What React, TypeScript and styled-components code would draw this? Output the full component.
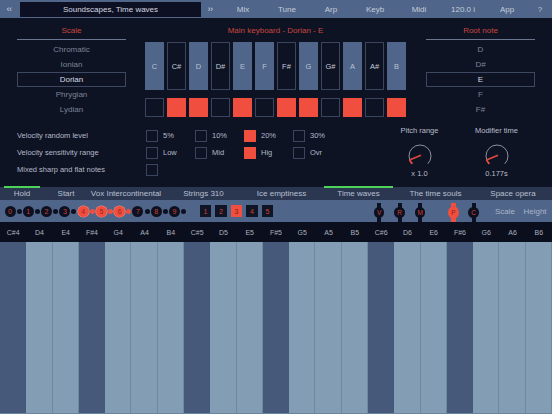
import React from "react";
import styled, { createGlobalStyle } from "styled-components";

const GlobalStyle = createGlobalStyle`
  html, body {
    margin: 0;
    padding: 0;
    background: #0e1324;
  }
  body {
    font-family: "Liberation Sans", Arial, sans-serif;
  }
  * {
    box-sizing: border-box;
  }
`;

const RED = "#f04e3e";

const Screen = styled.div`
  width: 552px;
  height: 414px;
  display: flex;
  flex-direction: column;
  overflow: hidden;
  background: #0e1324;
  color: #b4b9c6;
`;

/* ---------- top bar ---------- */

const TopBar = styled.div`
  height: 18px;
  flex-shrink: 0;
  background: #4f6589;
  display: flex;
  align-items: center;
  font-size: 8px;
  color: #c5ccd9;
`;

const Arrow = styled.div`
  width: 20px;
  padding-right: 2px;
  text-align: center;
  font-size: 9px;
  letter-spacing: -0.5px;
  color: #d0d6e2;
`;

const Title = styled.div`
  width: 181px;
  height: 15px;
  background: #0c1022;
  display: flex;
  align-items: center;
  justify-content: center;
  color: #d4d8e0;
  font-size: 8px;
`;

const NavItem = styled.div<{ $w?: number }>`
  width: ${(p) => p.$w ?? 44}px;
  text-align: center;
`;

/* ---------- main panel ---------- */

const Panel = styled.div`
  height: 169px;
  flex-shrink: 0;
  padding: 5px 0 0 17px;
`;

const Upper = styled.div`
  display: flex;
  align-items: flex-start;
`;

const Column = styled.div<{ $w: number; $ml?: number }>`
  width: ${(p) => p.$w}px;
  margin-left: ${(p) => p.$ml ?? 0}px;
`;

const SectionTitle = styled.div<{ $ruled?: boolean }>`
  height: 17px;
  line-height: 15px;
  text-align: center;
  color: #c9463e;
  font-size: 8px;
  border-bottom: 1px solid ${(p) => (p.$ruled ? "#6b7590" : "transparent")};
`;

const List = styled.div`
  padding-top: 2px;
`;

const ListItem = styled.div<{ $selected?: boolean }>`
  height: 15px;
  line-height: 13px;
  text-align: center;
  font-size: 8px;
  border: 1px solid ${(p) => (p.$selected ? "#3d4863" : "transparent")};
  color: ${(p) => (p.$selected ? "#d7dae2" : "#7c8396")};
`;

const KeyRow = styled.div`
  display: flex;
  gap: 3px;
  margin-top: 2px;
`;

const NoteKey = styled.div<{ $sharp?: boolean }>`
  width: 19px;
  height: 48px;
  display: flex;
  align-items: center;
  justify-content: center;
  font-size: 7.5px;
  background: ${(p) => (p.$sharp ? "#0e1324" : "#4f6589")};
  border: 1px solid ${(p) => (p.$sharp ? "#3a4560" : "#4f6589")};
  color: ${(p) => (p.$sharp ? "#c5cad6" : "#b8c2d6")};
`;

const PadRow = styled.div`
  display: flex;
  gap: 3px;
  margin-top: 8px;
`;

const Pad = styled.div<{ $on?: boolean }>`
  width: 19px;
  height: 19px;
  background: ${(p) => (p.$on ? RED : "transparent")};
  border: 1px solid ${(p) => (p.$on ? RED : "#3a4560")};
`;

const Lower = styled.div`
  display: flex;
  margin-top: 10px;
`;

const OptionGrid = styled.div`
  display: grid;
  grid-template-columns: 129px repeat(4, 49px);
  grid-auto-rows: 17px;
  align-items: center;
  font-size: 7.5px;
`;

const OptionLabel = styled.div`
  color: #b4b9c6;
`;

const Option = styled.div`
  display: flex;
  align-items: center;
  gap: 5px;
  color: #b4b9c6;
`;

const Check = styled.div<{ $on?: boolean }>`
  width: 12px;
  height: 12px;
  background: ${(p) => (p.$on ? RED : "transparent")};
  border: 1px solid ${(p) => (p.$on ? RED : "#3a4560")};
`;

const Knobs = styled.div`
  display: flex;
  margin-left: 39px;
  margin-top: -1px;
`;

const KnobCol = styled.div`
  width: 77px;
  display: flex;
  flex-direction: column;
  align-items: center;
  font-size: 7.5px;
  color: #b8bdc9;
`;

const KnobText = styled.div`
  height: 10px;
  line-height: 10px;
`;

const KnobSvg = styled.svg`
  width: 26px;
  height: 26px;
  margin-top: 7px;
  display: block;
`;

/* ---------- preset tabs ---------- */

const TabBar = styled.div`
  height: 13px;
  flex-shrink: 0;
  display: flex;
  background: #2b3650;
`;

const Tab = styled.div<{ $w: number; $active?: boolean }>`
  width: ${(p) => p.$w}px;
  position: relative;
  text-align: center;
  line-height: 14px;
  font-size: 8px;
  color: #b8c0d0;
  &::before {
    content: "";
    position: absolute;
    top: -1px;
    left: 4px;
    right: 4px;
    height: 2px;
    background: ${(p) => (p.$active ? "#4cd35a" : "transparent")};
  }
`;

/* ---------- control row ---------- */

const ControlRow = styled.div`
  height: 22px;
  flex-shrink: 0;
  background: #4f6589;
  display: flex;
  align-items: center;
  padding-left: 4.5px;
  padding-right: 2px;
`;

const SeqGroup = styled.div`
  display: flex;
  align-items: center;
  gap: 1.15px;
`;

const SeqCircle = styled.div<{ $on?: boolean }>`
  width: 11px;
  height: 11px;
  border-radius: 50%;
  display: flex;
  align-items: center;
  justify-content: center;
  font-size: 7px;
  background: ${(p) => (p.$on ? RED : "#0c1020")};
  color: ${(p) => (p.$on ? "#9a2519" : "#d2402f")};
  box-shadow: ${(p) => (p.$on ? "0 0 0 0.6px #ff8a7c" : "none")};
`;

const SeqDot = styled.div<{ $on?: boolean }>`
  width: 5px;
  height: 5px;
  border-radius: 50%;
  background: ${(p) => (p.$on ? RED : "#0c1020")};
`;

const SquareGroup = styled.div`
  display: flex;
  gap: 4px;
  margin-left: 13.5px;
`;

const NumSquare = styled.div<{ $on?: boolean }>`
  width: 11.5px;
  height: 11.5px;
  display: flex;
  align-items: center;
  justify-content: center;
  font-size: 7px;
  background: ${(p) => (p.$on ? RED : "#101525")};
  color: ${(p) => (p.$on ? "#7e1c12" : "#d2402f")};
`;

const StemGroup = styled.div`
  margin-left: auto;
  display: flex;
  align-self: stretch;
  align-items: flex-end;
`;

const Stem = styled.div<{ $on?: boolean; $ml: number }>`
  width: 10px;
  height: 19px;
  margin-left: ${(p) => p.$ml}px;
  display: flex;
  align-items: center;
  justify-content: center;
  background: linear-gradient(
    to right,
    transparent ${(p) => (p.$on ? 2.5 : 3)}px,
    ${(p) => (p.$on ? RED : "#0c1020")} ${(p) => (p.$on ? 2.5 : 3)}px,
    ${(p) => (p.$on ? RED : "#0c1020")} ${(p) => (p.$on ? 7.5 : 7)}px,
    transparent ${(p) => (p.$on ? 7.5 : 7)}px
  );
`;

const StemKnob = styled.div<{ $on?: boolean }>`
  width: ${(p) => (p.$on ? 11 : 10.5)}px;
  height: ${(p) => (p.$on ? 13 : 10.5)}px;
  flex-shrink: 0;
  border-radius: 50%;
  display: flex;
  align-items: center;
  justify-content: center;
  font-size: 6.5px;
  background: ${(p) => (p.$on ? RED : "#0c1020")};
  color: ${(p) => (p.$on ? "#8e2218" : "#d2402f")};
`;

const RowLabel = styled.div<{ $ml?: number }>`
  width: 30px;
  margin-left: ${(p) => p.$ml ?? 0}px;
  text-align: center;
  font-size: 8px;
  color: #aab4c8;
  align-self: center;
`;

/* ---------- playing keyboard ---------- */

const LabelBar = styled.div`
  height: 20px;
  flex-shrink: 0;
  background: #0b0f1d;
  display: grid;
  grid-template-columns: repeat(21, 1fr);
  align-items: center;
`;

const NoteLabel = styled.div`
  text-align: center;
  font-size: 7px;
  color: #aab0be;
`;

const Keyboard = styled.div`
  flex: 1;
  display: grid;
  grid-template-columns: repeat(21, 1fr);
  border-bottom: 1px solid #6a84a0;
`;

const PlayKey = styled.div<{ $sharp?: boolean }>`
  background: ${(p) => (p.$sharp ? "#47597b" : "#829db4")};
  border-right: 1px solid ${(p) => (p.$sharp ? "#47597b" : "#6f89a1")};
`;

/* ---------- data ---------- */

const scales = ["Chromatic", "Ionian", "Dorian", "Phrygian", "Lydian"];
const roots = ["D", "D#", "E", "F", "F#"];
const keys = ["C", "C#", "D", "D#", "E", "F", "F#", "G", "G#", "A", "A#", "B"];
const inScale = [false, true, true, false, true, false, true, true, false, true, false, true];
const navItems = ["Mix", "Tune", "Arp", "Keyb", "Midi", "120.0 i", "App"];
const tabs: [string, number][] = [
  ["Hold", 44],
  ["Start", 44],
  ["Vox Intercontinental", 76],
  ["Strings 310", 79],
  ["Ice emptiness", 77],
  ["Time waves", 77],
  ["The time souls", 77],
  ["Space opera", 78],
];
const notes = [
  "C#4", "D4", "E4", "F#4", "G4", "A4", "B4",
  "C#5", "D5", "E5", "F#5", "G5", "A5", "B5",
  "C#6", "D6", "E6", "F#6", "G6", "A6", "B6",
];
const stems: [string, number, boolean][] = [
  ["V", 0, false],
  ["R", 10.3, false],
  ["M", 10.7, false],
  ["P", 23.3, true],
  ["C", 10, false],
];

const Knob = () => {
  const cx = 13;
  const r = 11;
  const pt = (deg: number) => {
    const a = (deg * Math.PI) / 180;
    return [cx + r * Math.cos(a), cx + r * Math.sin(a)];
  };
  const [sx, sy] = pt(135);
  const [ex, ey] = pt(45);
  const [px, py] = pt(160);
  return (
    <KnobSvg viewBox="0 0 26 26">
      <path
        d={`M${sx} ${sy} A${r} ${r} 0 1 1 ${ex} ${ey}`}
        fill="none"
        stroke="#8b90a0"
        strokeWidth="1"
      />
      <path
        d={`M${sx} ${sy} A${r} ${r} 0 0 1 ${px} ${py}`}
        fill="none"
        stroke="#e0483e"
        strokeWidth="2"
      />
      <line x1="14" y1="12.2" x2={px + 0.4} y2={py} stroke="#e0483e" strokeWidth="1.5" />
    </KnobSvg>
  );
};

const App = () => {
  return (
    <>
      <GlobalStyle />
      <Screen>
        <TopBar>
          <Arrow>‹‹</Arrow>
          <Title>Soundscapes, Time waves</Title>
          <Arrow>››</Arrow>
          {navItems.map((n) => (
            <NavItem key={n}>{n}</NavItem>
          ))}
          <NavItem $w={22}>?</NavItem>
        </TopBar>

        <Panel>
          <Upper>
            <Column $w={109}>
              <SectionTitle $ruled>Scale</SectionTitle>
              <List>
                {scales.map((s) => (
                  <ListItem key={s} $selected={s === "Dorian"}>
                    {s}
                  </ListItem>
                ))}
              </List>
            </Column>

            <Column $w={261} $ml={19}>
              <SectionTitle>Main keyboard - Dorian - E</SectionTitle>
              <KeyRow>
                {keys.map((k) => (
                  <NoteKey key={k} $sharp={k.includes("#")}>
                    {k}
                  </NoteKey>
                ))}
              </KeyRow>
              <PadRow>
                {inScale.map((on, i) => (
                  <Pad key={i} $on={on} />
                ))}
              </PadRow>
            </Column>

            <Column $w={109} $ml={20}>
              <SectionTitle $ruled>Root note</SectionTitle>
              <List>
                {roots.map((s) => (
                  <ListItem key={s} $selected={s === "E"}>
                    {s}
                  </ListItem>
                ))}
              </List>
            </Column>
          </Upper>

          <Lower>
            <OptionGrid>
              <OptionLabel>Velocity random level</OptionLabel>
              <Option><Check />5%</Option>
              <Option><Check />10%</Option>
              <Option><Check $on />20%</Option>
              <Option><Check />30%</Option>

              <OptionLabel>Velocity sensitivity range</OptionLabel>
              <Option><Check />Low</Option>
              <Option><Check />Mid</Option>
              <Option><Check $on />Hig</Option>
              <Option><Check />Ovr</Option>

              <OptionLabel>Mixed sharp and flat notes</OptionLabel>
              <Option><Check /></Option>
            </OptionGrid>

            <Knobs>
              <KnobCol>
                <KnobText>Pitch range</KnobText>
                <Knob />
                <KnobText>x 1.0</KnobText>
              </KnobCol>
              <KnobCol>
                <KnobText>Modifier time</KnobText>
                <Knob />
                <KnobText>0.177s</KnobText>
              </KnobCol>
            </Knobs>
          </Lower>
        </Panel>

        <TabBar>
          {tabs.map(([t, w]) => (
            <Tab key={t} $w={w} $active={t === "Hold" || t === "Time waves"}>
              {t}
            </Tab>
          ))}
        </TabBar>

        <ControlRow>
          <SeqGroup>
            {Array.from({ length: 10 }).map((_, i) => (
              <React.Fragment key={i}>
                <SeqCircle $on={i >= 4 && i <= 6}>{i}</SeqCircle>
                <SeqDot $on={i >= 4 && i <= 6} />
              </React.Fragment>
            ))}
          </SeqGroup>
          <SquareGroup>
            {[1, 2, 3, 4, 5].map((n) => (
              <NumSquare key={n} $on={n === 3}>
                {n}
              </NumSquare>
            ))}
          </SquareGroup>
          <StemGroup>
            {stems.map(([l, ml, on]) => (
              <Stem key={l} $ml={ml} $on={on}>
                <StemKnob $on={on}>{l}</StemKnob>
              </Stem>
            ))}
            <RowLabel $ml={11.5}>Scale</RowLabel>
            <RowLabel>Height</RowLabel>
          </StemGroup>
        </ControlRow>

        <LabelBar>
          {notes.map((n) => (
            <NoteLabel key={n}>{n}</NoteLabel>
          ))}
        </LabelBar>

        <Keyboard>
          {notes.map((n) => (
            <PlayKey key={n} $sharp={n.includes("#")} />
          ))}
        </Keyboard>
      </Screen>
    </>
  );
};

export default App;
